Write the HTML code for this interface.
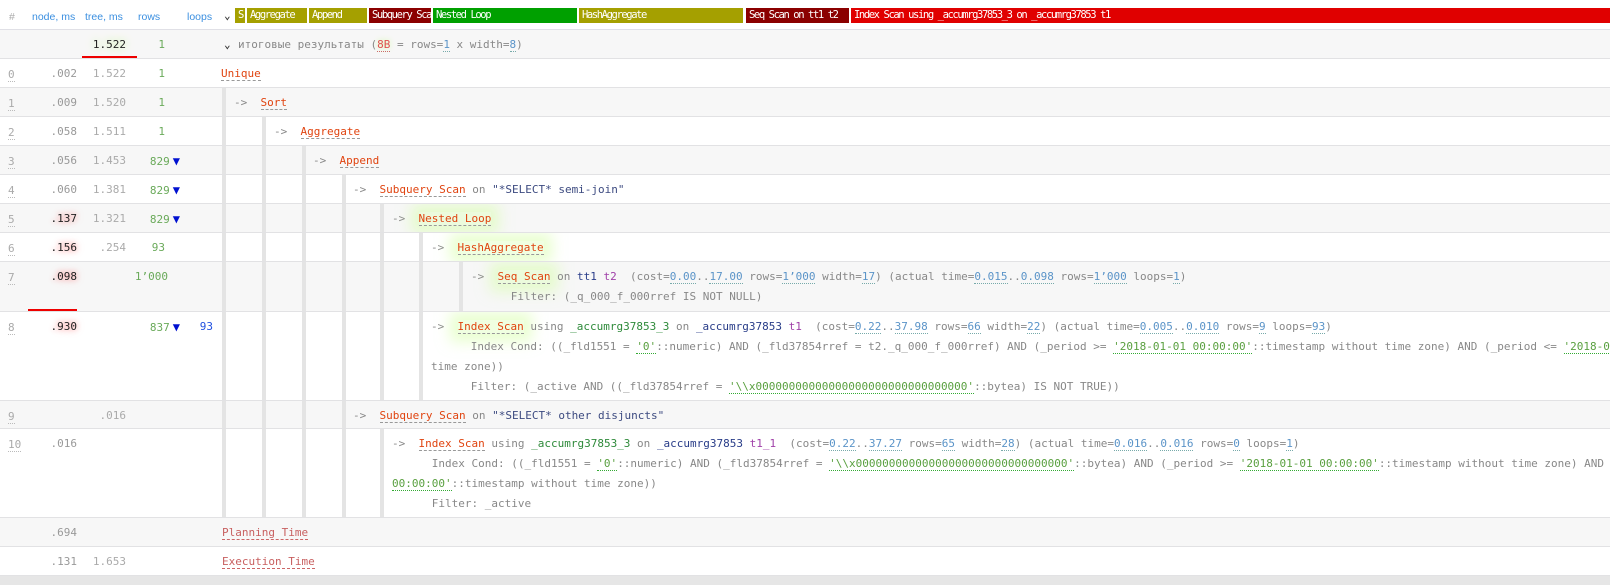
<!DOCTYPE html>
<html><head><meta charset="utf-8"><style>
*{margin:0;padding:0;box-sizing:border-box}
body{width:1610px;height:585px;overflow:hidden;background:#fff;font-family:"DejaVu Sans Mono","Liberation Mono",monospace;font-size:11px;color:#888;position:relative}
.row{position:absolute;left:0;width:1610px;border-bottom:1px solid #e2e2e4;overflow:hidden}
.g{background:#f7f7f7}
.c{position:absolute;top:5px;line-height:20px;white-space:pre}
.r{text-align:right}
.id{left:8px;color:#aaa;border-bottom:1px dotted #bbb;line-height:13px;top:9px}
.nd{right:1533px;color:#999}
.tr{right:1484px;color:#aaa}
.rw{right:1445px;color:#6aaa5a}
.lp{right:1397px;color:#2050e0}
.hot{color:#222;text-shadow:0 0 6px #f88,0 0 10px #fbb}
.tri{color:#0010d0;font-size:12px;margin-left:3px}
.bar{position:absolute;top:0;bottom:0;width:4px;background:#e4e4e4}
.pl{position:absolute;top:5px;line-height:20px;white-space:pre}
.n{color:#e04410;border-bottom:1px dashed #999}
.glow{box-shadow:0 0 14px 8px rgba(215,255,170,.55);background:rgba(225,255,195,.5)}
.num{color:#5b94c8;border-bottom:1px dotted #7aa}
.s{color:#5aa040;border-bottom:1px dotted #3a3}
.ix{color:#2e8a3a}
.tb{color:#283c88}
.al{color:#a040a8}
.q{color:#3c4a80}
.hdr{position:absolute;top:11px;font-size:10.5px;color:#3b8fe0;font-family:"Liberation Sans",sans-serif}
.seg{position:absolute;top:8px;height:15px;color:#fff;font-size:10.5px;letter-spacing:-1.4px;line-height:15px;padding-left:3px;white-space:nowrap;overflow:hidden}
</style></head><body>
<div style="position:absolute;left:0;top:0;width:1610px;height:30px;border-bottom:1px solid #e0e0e6">
<div class="hdr" style="left:9px;color:#aaa">#</div>
<div class="hdr" style="left:32px">node, ms</div>
<div class="hdr" style="left:85px">tree, ms</div>
<div class="hdr" style="left:138px">rows</div>
<div class="hdr" style="left:187px">loops</div>
<div style="position:absolute;left:224px;top:9px;font-size:11px;color:#333;font-weight:bold">&#8964;</div>
<div class="seg" style="left:235px;width:10px;background:#a5a000">S</div>
<div class="seg" style="left:247px;width:60px;background:#a5a000">Aggregate</div>
<div class="seg" style="left:309px;width:58px;background:#a5a000">Append</div>
<div class="seg" style="left:369px;width:62px;background:#8b0000">Subquery Scan</div>
<div class="seg" style="left:433px;width:144px;background:#00a000">Nested Loop</div>
<div class="seg" style="left:579px;width:164px;background:#a5a000">HashAggregate</div>
<div class="seg" style="left:746px;width:103px;background:#8b0000">Seq Scan on tt1 t2</div>
<div class="seg" style="left:851px;width:759px;background:#e00000">Index Scan using _accumrg37853_3 on _accumrg37853 t1</div>
</div>

<div class="row g" style="top:30px;height:29px">
<div class="c tr r" style="color:#222;text-shadow:0 0 8px #cfa,0 0 12px #dfb">1.522</div>
<div class="c rw r">1</div>
<div class="pl" style="left:224px;color:#333;font-weight:bold">&#8964;</div>
<div class="pl" style="left:238px">итоговые результаты (<span style="color:#e05050;border-bottom:1px dotted #c66;text-shadow:0 0 6px #cf9">8B</span> = rows=<span class="num">1</span> x width=<span class="num">8</span>)</div>
<div style="position:absolute;left:82px;width:55px;bottom:-1px;height:3px;background:#e00"></div>
</div>

<div class="row" style="top:59px;height:29px">
<div class="c id">0</div><div class="c nd r">.002</div><div class="c tr r">1.522</div><div class="c rw r">1</div>
<div class="pl" style="left:221px"><span class="n">Unique</span></div>
</div>
<div class="row g" style="top:88px;height:29px">
<div class="c id">1</div><div class="c nd r">.009</div><div class="c tr r">1.520</div><div class="c rw r">1</div>
<div class="bar" style="left:222px"></div>
<div class="pl" style="left:234px">->  <span class="n">Sort</span></div>
</div>
<div class="row" style="top:117px;height:29px">
<div class="c id">2</div><div class="c nd r">.058</div><div class="c tr r">1.511</div><div class="c rw r">1</div>
<div class="bar" style="left:222px"></div><div class="bar" style="left:262px"></div>
<div class="pl" style="left:274px">->  <span class="n">Aggregate</span></div>
</div>
<div class="row g" style="top:146px;height:29px">
<div class="c id">3</div><div class="c nd r">.056</div><div class="c tr r">1.453</div><div class="c rw r" style="right:1430px">829<span class="tri">&#9660;</span></div>
<div class="bar" style="left:222px"></div><div class="bar" style="left:262px"></div><div class="bar" style="left:302px"></div>
<div class="pl" style="left:313px">->  <span class="n">Append</span></div>
</div>
<div class="row" style="top:175px;height:29px">
<div class="c id">4</div><div class="c nd r">.060</div><div class="c tr r">1.381</div><div class="c rw r" style="right:1430px">829<span class="tri">&#9660;</span></div>
<div class="bar" style="left:222px"></div><div class="bar" style="left:262px"></div><div class="bar" style="left:302px"></div><div class="bar" style="left:342px"></div>
<div class="pl" style="left:353px">->  <span class="n">Subquery Scan</span> on <span class="q">"*SELECT* semi-join"</span></div>
</div>
<div class="row g" style="top:204px;height:29px">
<div class="c id">5</div><div class="c nd r hot">.137</div><div class="c tr r">1.321</div><div class="c rw r" style="right:1430px">829<span class="tri">&#9660;</span></div>
<div class="bar" style="left:222px"></div><div class="bar" style="left:262px"></div><div class="bar" style="left:302px"></div><div class="bar" style="left:342px"></div><div class="bar" style="left:380px"></div>
<div class="pl" style="left:392px">->  <span class="n glow">Nested Loop</span></div>
</div>
<div class="row" style="top:233px;height:29px">
<div class="c id">6</div><div class="c nd r hot">.156</div><div class="c tr r">.254</div><div class="c rw r">93</div>
<div class="bar" style="left:222px"></div><div class="bar" style="left:262px"></div><div class="bar" style="left:302px"></div><div class="bar" style="left:342px"></div><div class="bar" style="left:380px"></div><div class="bar" style="left:419px"></div>
<div class="pl" style="left:431px">->  <span class="n glow">HashAggregate</span></div>
</div>
<div class="row g" style="top:262px;height:50px">
<div class="c id">7</div><div class="c nd r hot">.098</div><div class="c rw r" style="right:1442px">1’000</div>
<div class="bar" style="left:222px"></div><div class="bar" style="left:262px"></div><div class="bar" style="left:302px"></div><div class="bar" style="left:342px"></div><div class="bar" style="left:380px"></div><div class="bar" style="left:419px"></div><div class="bar" style="left:459px"></div>
<div class="pl" style="left:471px">->  <span class="n glow">Seq Scan</span> on <span class="tb">tt1</span> <span class="al">t2</span>  (cost=<span class="num">0.00</span>..<span class="num">17.00</span> rows=<span class="num">1’000</span> width=<span class="num">17</span>) (actual time=<span class="num">0.015</span>..<span class="num">0.098</span> rows=<span class="num">1’000</span> loops=<span class="num">1</span>)
      Filter: (_q_000_f_000rref IS NOT NULL)</div>
<div style="position:absolute;left:28px;width:49px;bottom:-1px;height:3px;background:#e00"></div>
</div>
<div class="row" style="top:312px;height:89px">
<div class="c id">8</div><div class="c nd r hot">.930</div><div class="c rw r" style="right:1430px">837<span class="tri">&#9660;</span></div><div class="c lp r">93</div>
<div class="bar" style="left:222px"></div><div class="bar" style="left:262px"></div><div class="bar" style="left:302px"></div><div class="bar" style="left:342px"></div><div class="bar" style="left:380px"></div><div class="bar" style="left:419px"></div>
<div class="pl" style="left:431px">->  <span class="n glow">Index Scan</span> using <span class="ix">_accumrg37853_3</span> on <span class="tb">_accumrg37853</span> <span class="al">t1</span>  (cost=<span class="num">0.22</span>..<span class="num">37.98</span> rows=<span class="num">66</span> width=<span class="num">22</span>) (actual time=<span class="num">0.005</span>..<span class="num">0.010</span> rows=<span class="num">9</span> loops=<span class="num">93</span>)
      Index Cond: ((_fld1551 = <span class="s">'0'</span>::numeric) AND (_fld37854rref = t2._q_000_f_000rref) AND (_period &gt;= <span class="s">'2018-01-01 00:00:00'</span>::timestamp without time zone) AND (_period &lt;= <span class="s">'2018-01-31 00:00:00'</span>::timestamp without
time zone))
      Filter: (_active AND ((_fld37854rref = <span class="s">'\\x00000000000000000000000000000000'</span>::bytea) IS NOT TRUE))</div>
</div>
<div class="row g" style="top:401px;height:28px">
<div class="c id">9</div><div class="c tr r">.016</div>
<div class="bar" style="left:222px"></div><div class="bar" style="left:262px"></div><div class="bar" style="left:302px"></div><div class="bar" style="left:342px"></div>
<div class="pl" style="left:353px">->  <span class="n">Subquery Scan</span> on <span class="q">"*SELECT* other disjuncts"</span></div>
</div>
<div class="row" style="top:429px;height:89px">
<div class="c id">10</div><div class="c nd r">.016</div>
<div class="bar" style="left:222px"></div><div class="bar" style="left:262px"></div><div class="bar" style="left:302px"></div><div class="bar" style="left:342px"></div><div class="bar" style="left:380px"></div>
<div class="pl" style="left:392px">->  <span class="n">Index Scan</span> using <span class="ix">_accumrg37853_3</span> on <span class="tb">_accumrg37853</span> <span class="al">t1_1</span>  (cost=<span class="num">0.22</span>..<span class="num">37.27</span> rows=<span class="num">65</span> width=<span class="num">28</span>) (actual time=<span class="num">0.016</span>..<span class="num">0.016</span> rows=<span class="num">0</span> loops=<span class="num">1</span>)
      Index Cond: ((_fld1551 = <span class="s">'0'</span>::numeric) AND (_fld37854rref = <span class="s">'\\x00000000000000000000000000000000'</span>::bytea) AND (_period &gt;= <span class="s">'2018-01-01 00:00:00'</span>::timestamp without time zone) AND (_period
<span class="s">00:00:00'</span>::timestamp without time zone))
      Filter: _active</div>
</div>
<div class="row g" style="top:518px;height:29px">
<div class="c nd r">.694</div>
<div class="pl" style="left:222px"><span class="n" style="color:#c86060;border-bottom-color:#c66">Planning Time</span></div>
</div>
<div class="row" style="top:547px;height:29px">
<div class="c nd r">.131</div><div class="c tr r">1.653</div>
<div class="pl" style="left:222px"><span class="n" style="color:#c86060;border-bottom-color:#c66">Execution Time</span></div>
</div>
<div style="position:absolute;left:0;top:576px;width:1610px;height:9px;background:#e6e6e6"></div>
</body></html>
